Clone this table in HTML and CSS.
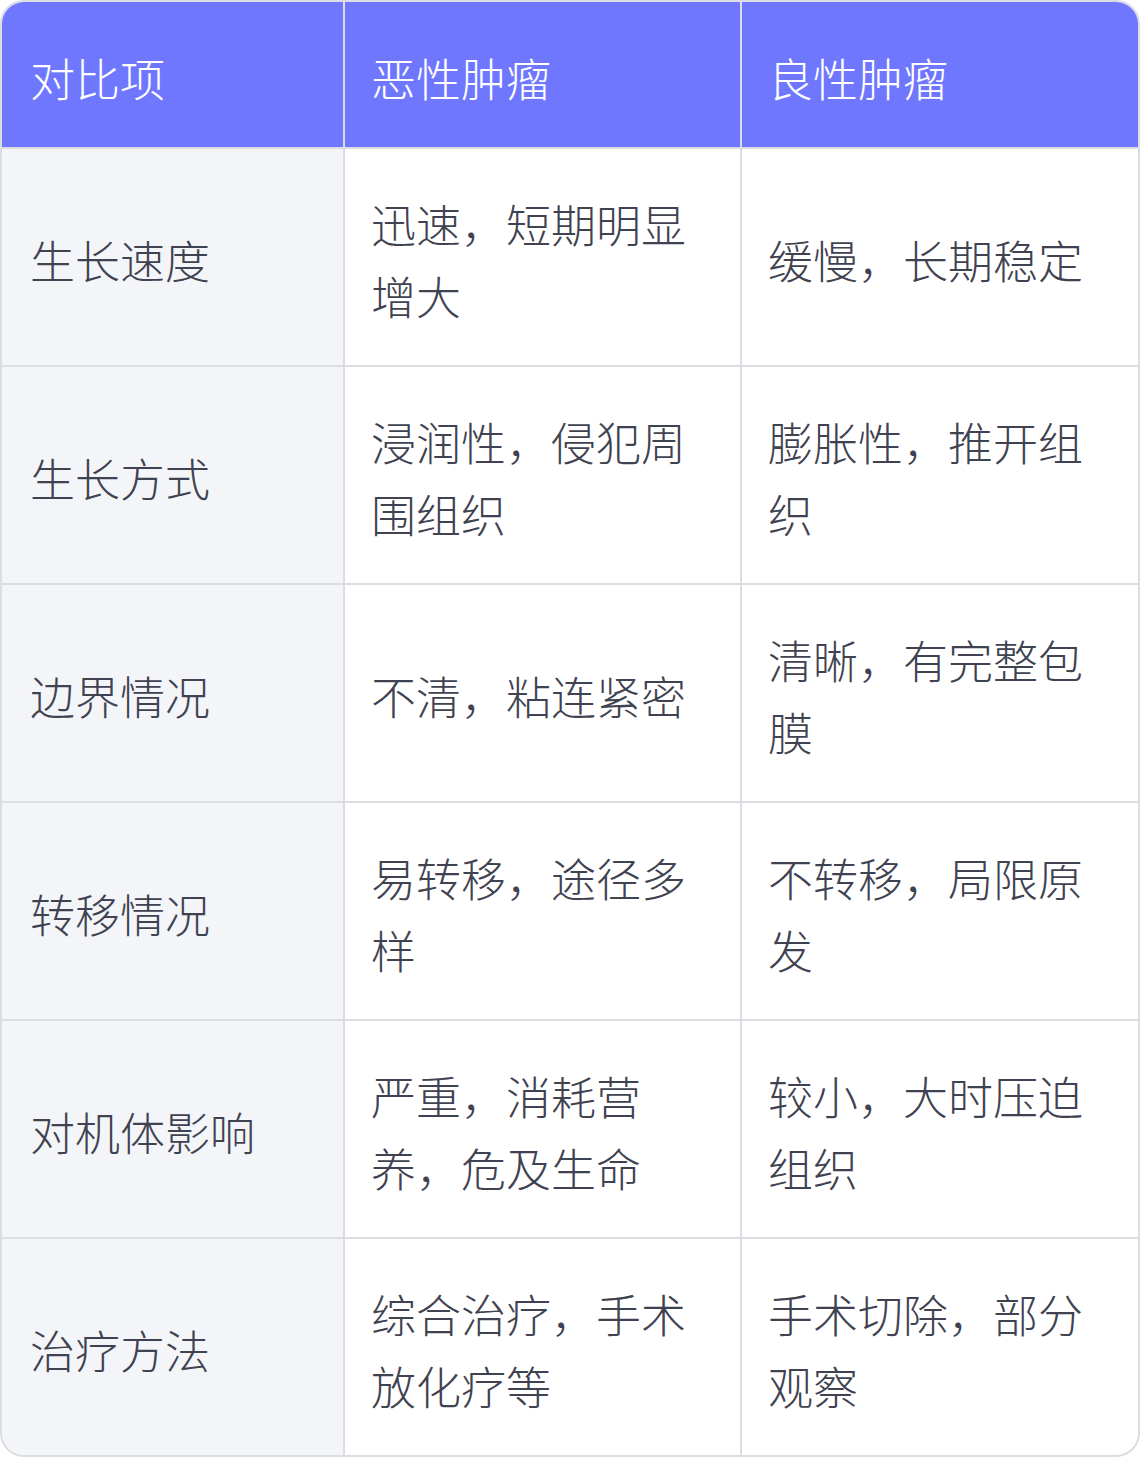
FILE: index.html
```html
<!DOCTYPE html>
<html lang="zh-CN">
<head>
<meta charset="utf-8">
<title>恶性肿瘤与良性肿瘤对比</title>
<link rel="stylesheet" href="styles.css">
</head>
<body>
<div class="card">
  <table class="compare">
    <colgroup>
      <col class="c1"><col class="c2"><col class="c3">
    </colgroup>
    <thead>
      <tr><th>对比项</th><th>恶性肿瘤</th><th>良性肿瘤</th></tr>
    </thead>
    <tbody>
      <tr><td class="label">生长速度</td><td>迅速，短期明显增大</td><td>缓慢，长期稳定</td></tr>
      <tr><td class="label">生长方式</td><td>浸润性，侵犯周围组织</td><td>膨胀性，推开组织</td></tr>
      <tr><td class="label">边界情况</td><td>不清，粘连紧密</td><td>清晰，有完整包膜</td></tr>
      <tr><td class="label">转移情况</td><td>易转移，途径多样</td><td>不转移，局限原发</td></tr>
      <tr><td class="label">对机体影响</td><td>严重，消耗营养，危及生命</td><td>较小，大时压迫组织</td></tr>
      <tr><td class="label">治疗方法</td><td>综合治疗，手术放化疗等</td><td>手术切除，部分观察</td></tr>
    </tbody>
  </table>
</div>
</body>
</html>
```
FILE: styles.css
```css
html, body {
  margin: 0;
  padding: 0;
  background: #ffffff;
}
.card {
  width: 1140px;
  box-sizing: border-box;
  border: 2px solid #dcdde2;
  border-radius: 24px;
  overflow: hidden;
  background: #ffffff;
}
.compare {
  width: 100%;
  border-collapse: collapse;
  table-layout: fixed;
  font-family: "Noto Sans CJK SC", "Noto Sans", sans-serif;
  font-size: 45px;
  line-height: 72px;
  color: #3f4250;
}
.c1 { width: 342px; }
.c2 { width: 397px; }
.c3 { width: auto; }
.compare th,
.compare td {
  text-align: left;
  vertical-align: middle;
  padding: 39px 28px 33px 26px;
  border: 2px solid #dcdde2;
  font-weight: 300;
}
.compare tr > :first-child {
  border-left: none;
  padding-left: 28px;
}
.compare tr > :last-child { border-right: none; }
.compare thead tr > * { border-top: none; }
.compare tbody tr:last-child > * { border-bottom: none; }
.compare th {
  background: #7077ff;
  color: #ffffff;
  padding-top: 40px;
}
.compare td { height: 144px; }
.compare td.label {
  background: #f4f5f9;
}
```
